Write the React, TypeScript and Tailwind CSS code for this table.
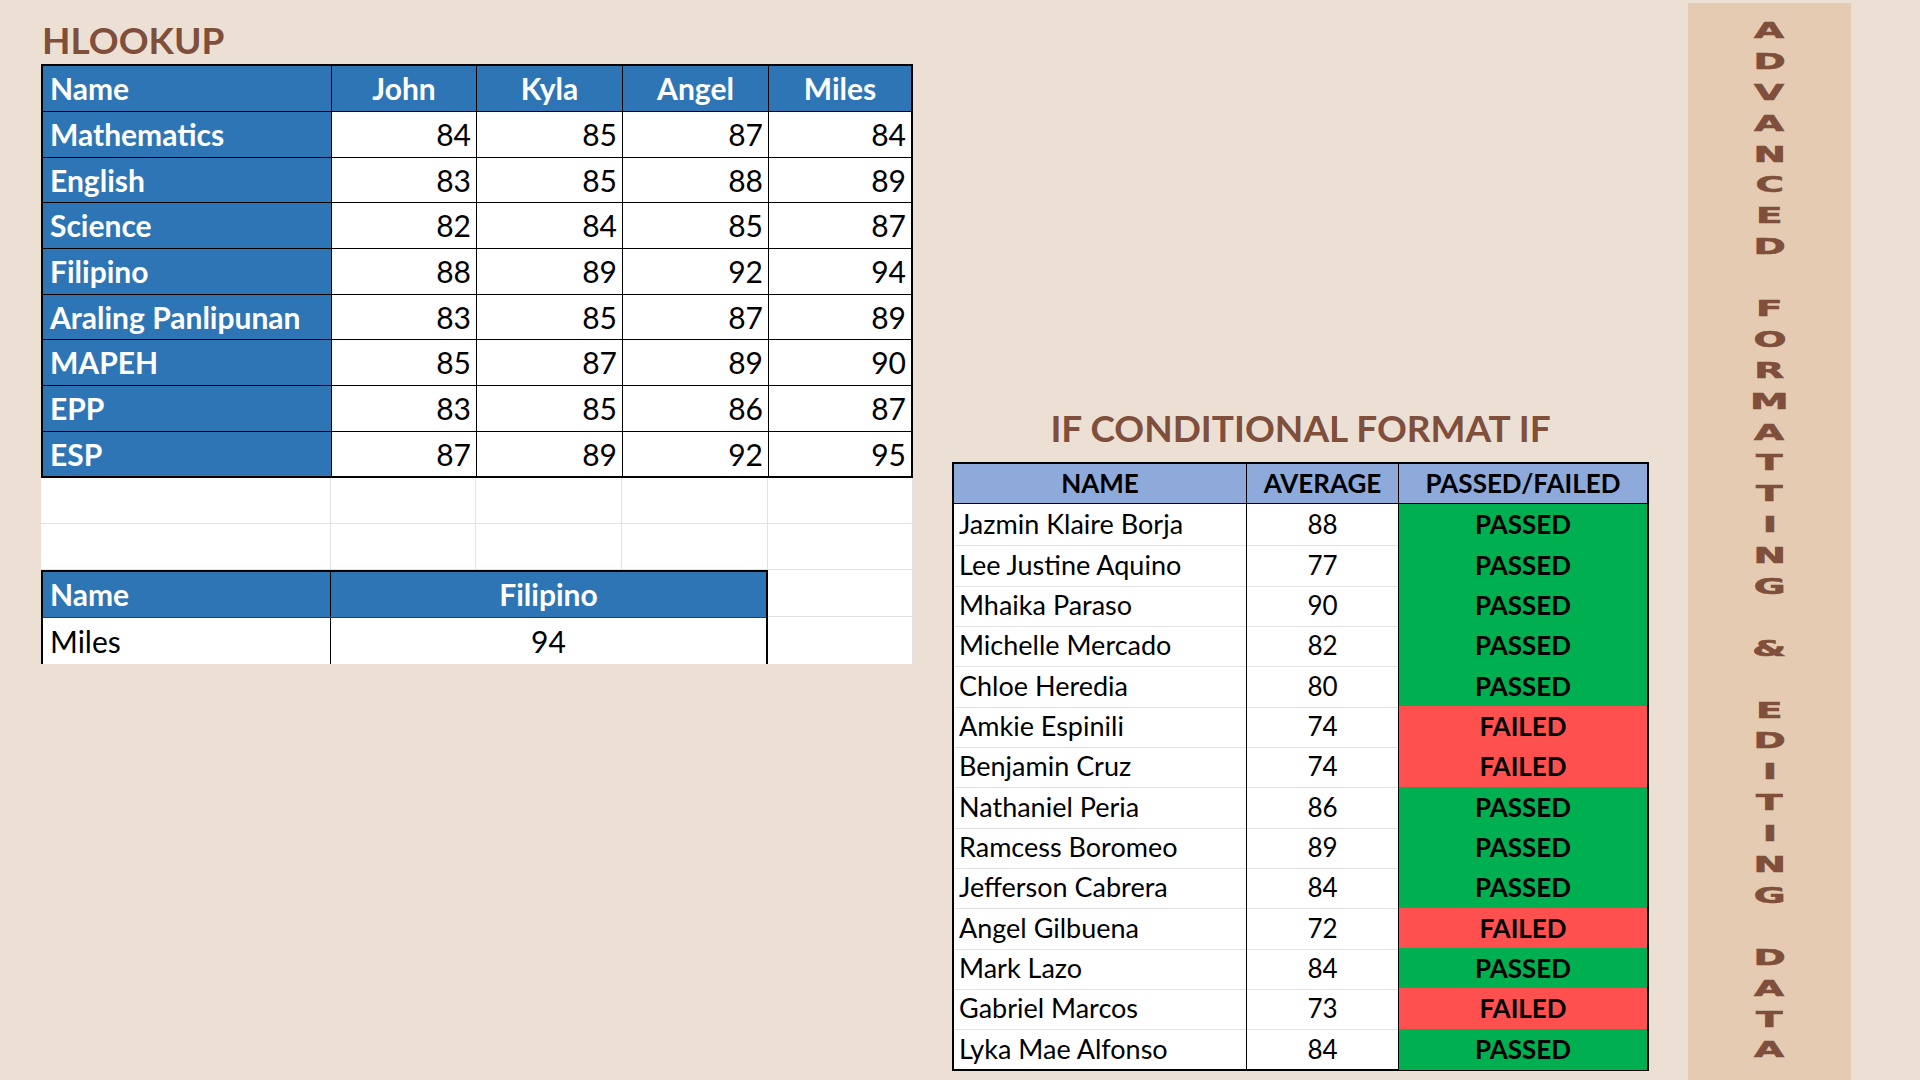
const subjects: [string, number[]][] = [
  ["Mathematics", [84, 85, 87, 84]],
  ["English", [83, 85, 88, 89]],
  ["Science", [82, 84, 85, 87]],
  ["Filipino", [88, 89, 92, 94]],
  ["Araling Panlipunan", [83, 85, 87, 89]],
  ["MAPEH", [85, 87, 89, 90]],
  ["EPP", [83, 85, 86, 87]],
  ["ESP", [87, 89, 92, 95]],
];

const students: [string, number, boolean][] = [
  ["Jazmin Klaire Borja", 88, true],
  ["Lee Justine Aquino", 77, true],
  ["Mhaika Paraso", 90, true],
  ["Michelle Mercado", 82, true],
  ["Chloe Heredia", 80, true],
  ["Amkie Espinili", 74, false],
  ["Benjamin Cruz", 74, false],
  ["Nathaniel Peria", 86, true],
  ["Ramcess Boromeo", 89, true],
  ["Jefferson Cabrera", 84, true],
  ["Angel Gilbuena", 72, false],
  ["Mark Lazo", 84, true],
  ["Gabriel Marcos", 73, false],
  ["Lyka Mae Alfonso", 84, true],
];

const banner = "ADVANCED FORMATTING & EDITING DATA".split("");

function HLookup() {
  return (
    <div className="w-[872px] shrink-0">
      <div className="h-[64px] pt-[21px]">
        <h1 className="text-[37px] leading-[37px] font-bold text-[#7f4f3b] pl-[1px]">HLOOKUP</h1>
      </div>

      {/* main table: black gaps act as the cell borders */}
      <div className="border-2 border-black bg-black grid gap-px grid-cols-[288px_144px_145px_145px_142px] grid-rows-[45px_45px_44px_45px_45px_44px_45px_45px_44px] text-[30px]">
        <div className="flex items-center pl-[7px] bg-[#2e75b6] text-white font-bold">Name</div>
        {["John", "Kyla", "Angel", "Miles"].map((n) => (
          <div key={n} className="flex items-center justify-center bg-[#2e75b6] text-white font-bold">
            {n}
          </div>
        ))}
        {subjects.flatMap(([subject, scores]) => [
          <div key={subject} className="flex items-center pl-[7px] bg-[#2e75b6] text-white font-bold">
            {subject}
          </div>,
          ...scores.map((s, i) => (
            <div key={subject + i} className="flex items-center justify-end pr-[5px] bg-white text-black">
              {s}
            </div>
          )),
        ])}
      </div>

      {/* blank sheet rows */}
      {[0, 1].map((r) => (
        <div key={r} className="grid grid-cols-[290px_145px_146px_146px_145px] h-[46px] bg-white">
          {[0, 1, 2, 3, 4].map((c) => (
            <div key={c} className="border-r border-b border-[#e2e2e2]" />
          ))}
        </div>
      ))}

      {/* lookup result */}
      <div className="flex bg-white">
        <div className="w-[727px] border-2 border-b-0 border-black text-[30px]">
          <div className="grid grid-cols-[288px_435px] h-[46px] bg-[#2e75b6] text-white font-bold border-b border-[#3a3a3a]">
            <div className="flex items-center pl-[7px] border-r border-black">Name</div>
            <div className="flex items-center justify-center">Filipino</div>
          </div>
          <div className="grid grid-cols-[288px_435px] h-[46px] text-black">
            <div className="flex items-center pl-[7px] border-r border-black">Miles</div>
            <div className="flex items-center justify-center">94</div>
          </div>
        </div>
        <div className="w-[145px] flex flex-col">
          <div className="h-[47px] border-r border-b border-[#e2e2e2]" />
          <div className="h-[47px] border-r border-[#e2e2e2]" />
        </div>
      </div>
    </div>
  );
}

function Conditional() {
  return (
    <div className="w-[697px] shrink-0 pt-[409px]">
      <h2 className="text-[37px] leading-[38px] font-bold text-[#7f4f3b] text-center">IF CONDITIONAL FORMAT IF</h2>
      <div className="mt-[15px] border-2 border-black bg-white">
        <div className="grid grid-cols-[293px_152px_248px] h-[40px] bg-[#8eaadb] text-black font-bold text-[26px] border-b border-black">
          <div className="flex items-center justify-center border-r border-black">NAME</div>
          <div className="flex items-center justify-center border-r border-black">AVERAGE</div>
          <div className="flex items-center justify-center">PASSED/FAILED</div>
        </div>
        {students.map(([name, avg, passed], r) => (
          <div
            key={name}
            className={`grid grid-cols-[293px_152px_248px] text-black ${r % 3 === 0 ? "h-[41px]" : "h-[40px]"}`}
          >
            <div className={`flex items-center pl-[5px] text-[27px] border-r border-black ${r < students.length - 1 ? "border-b border-b-[#e2e2e2]" : ""}`}>
              {name}
            </div>
            <div className={`flex items-center justify-center text-[26px] border-r border-black ${r < students.length - 1 ? "border-b border-b-[#e2e2e2]" : ""}`}>
              {avg}
            </div>
            <div className={`flex items-center justify-center text-[26px] font-bold ${passed ? "bg-[#00b050]" : "bg-[#ff5050]"}`}>
              {passed ? "PASSED" : "FAILED"}
            </div>
          </div>
        ))}
      </div>
    </div>
  );
}

function Banner() {
  return (
    <div className="w-[163px] shrink-0 mt-[3px] bg-[#e4cbb2] pt-[13px] flex flex-col items-center">
      {banner.map((ch, i) => (
        <div
          key={i}
          className="h-[30.9px] leading-[30.9px] text-[21px] font-bold text-[#7f4f3b] scale-x-[1.85] [-webkit-text-stroke:0.6px_#7f4f3b]"
          style={{ fontFamily: '"DejaVu Sans", sans-serif' }}
        >
          {ch === " " ? "\u00a0" : ch}
        </div>
      ))}
    </div>
  );
}

export default function App() {
  return (
    <main
      className="w-[1920px] h-[1080px] overflow-hidden bg-[#ece0d4] flex pl-[41px]"
      style={{ fontFamily: 'Lato, "Open Sans", sans-serif' }}
    >
      <HLookup />
      <div className="w-[39px] shrink-0" />
      <Conditional />
      <div className="w-[39px] shrink-0" />
      <Banner />
    </main>
  );
}
